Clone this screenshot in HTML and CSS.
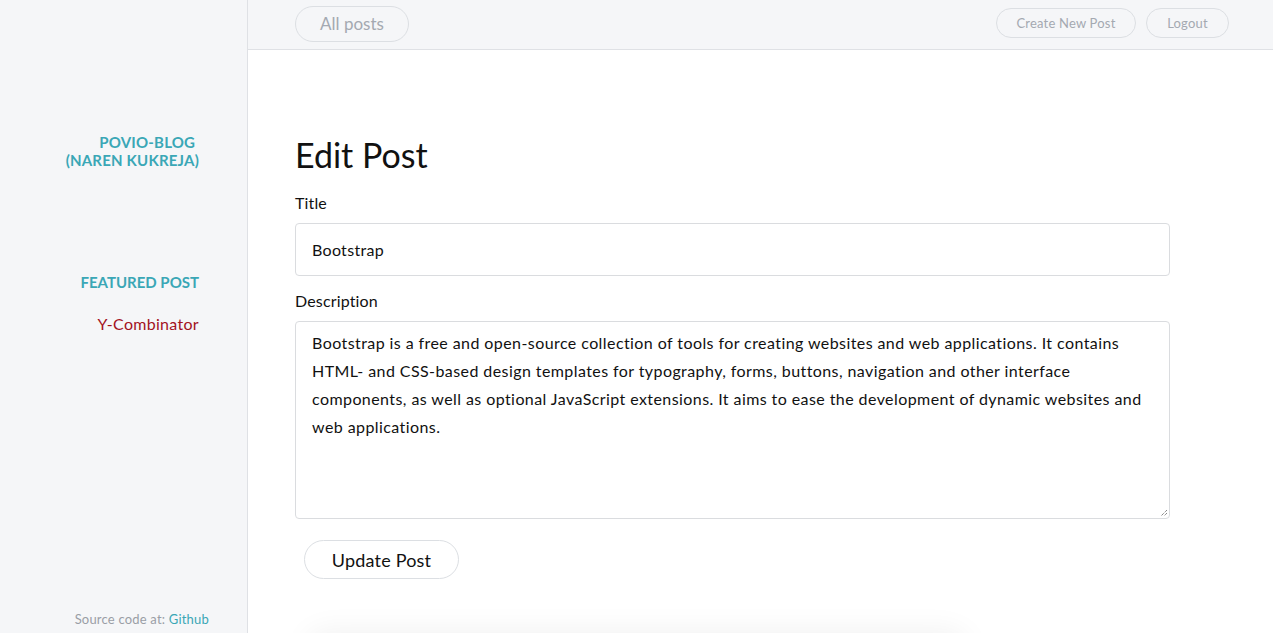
FILE: index.html
```html
<!DOCTYPE html>
<html>
<head>
<meta charset="utf-8">
<link rel="stylesheet" href="styles.css">
</head>
<body>
<div class="app">
  <aside class="sidebar">
    <div class="brand">POVIO-BLOG&nbsp;<br>(NAREN KUKREJA)</div>
    <div class="featured">
      <div class="featured-title">FEATURED POST</div>
      <a class="featured-link" href="#">Y-Combinator</a>
    </div>
    <div class="source">Source code at: <a href="#">Github</a></div>
  </aside>
  <div class="main">
    <header class="topbar">
      <a class="pill pill-lg" href="#">All posts</a>
      <div class="top-right">
        <a class="pill pill-sm" href="#">Create New Post</a>
        <a class="pill pill-sm" href="#">Logout</a>
      </div>
    </header>
    <section class="content">
      <h1 class="heading">Edit Post</h1>
      <label class="label">Title</label>
      <div class="input">Bootstrap</div>
      <label class="label">Description</label>
      <div class="textarea">Bootstrap is a free and open-source collection of tools for creating websites and web applications. It contains HTML- and CSS-based design templates for typography, forms, buttons, navigation and other interface components, as well as optional JavaScript extensions. It aims to ease the development of dynamic websites and web applications.<svg class="grip" width="8" height="8" viewBox="0 0 8 8"><path d="M7 1 L1 7 M7 4 L4 7" stroke="#555" stroke-width="1" stroke-dasharray="1 1"/></svg></div>
      <button class="update">Update Post</button>
      <div class="card"></div>
    </section>
  </div>
</div>
</body>
</html>
```
FILE: styles.css
```css
* { box-sizing: border-box; }
html, body { margin: 0; height: 100%; overflow: hidden; }
body { font-family: "Lato", "Open Sans", sans-serif; color: #111; background: #fff; }
a { text-decoration: none; }
.app { display: flex; height: 633px; overflow: hidden; }
.sidebar {
  width: 248px; flex: none; background: #f5f6f8; border-right: 1px solid #dfe1e5;
  display: flex; flex-direction: column; align-items: flex-end; padding: 133px 48px 0 0;
}
.brand { color: #3aa7b6; font-weight: 700; font-size: 15px; line-height: 18px; text-align: right; letter-spacing: 0.2px; }
.featured { margin-top: 104px; text-align: right; display: flex; flex-direction: column; align-items: flex-end; }
.featured-title { color: #3aa7b6; font-weight: 700; font-size: 15px; line-height: 18px; }
.featured-link { color: #a3121e; font-size: 16px; margin-top: 23px; letter-spacing: 0.3px; }
.source { margin-top: auto; margin-bottom: 6px; margin-right: -10px; font-size: 13px; color: #9a9ea6; line-height: 16px; letter-spacing: 0.2px; }
.source a { color: #3aa7b6; }
.main { flex: 1; display: flex; flex-direction: column; overflow: hidden; }
.topbar {
  flex: none; height: 50px; background: #f5f6f8; border-bottom: 1px solid #dfe1e5;
  display: flex; align-items: center; justify-content: space-between; padding: 0 44px 3px 47px;
}
.pill { border: 1px solid #dcdfe3; border-radius: 20px; color: #a4a9b1; display: inline-flex; align-items: center; justify-content: center; white-space: nowrap; }
.pill-lg { width: 114px; height: 36px; font-size: 17px; margin-top: 1px; }
.pill-sm { height: 30px; font-size: 13px; padding: 0; letter-spacing: 0.2px; }
.top-right { display: flex; gap: 10px; }
.top-right .pill:first-child { width: 140px; }
.top-right .pill:last-child { width: 83px; }
.content { flex: none; padding: 85px 104px 0 47px; display: flex; flex-direction: column; align-items: flex-start; }
.heading { font-weight: 400; font-size: 34px; margin: 0 0 18px; line-height: 40px; }
.label { font-size: 16px; line-height: 20px; margin-bottom: 10px; letter-spacing: 0.15px; }
.input {
  width: 875px; height: 53px; border: 1px solid #dadcdf; border-radius: 4px; padding: 0 16px;
  display: flex; align-items: center; font-size: 16px; margin-bottom: 15px; letter-spacing: 0.3px;
}
.textarea {
  position: relative; width: 875px; height: 198px; border: 1px solid #dadcdf; border-radius: 4px;
  padding: 7px 16px; font-size: 16px; line-height: 28px; letter-spacing: 0.42px;
}
.grip { position: absolute; right: 1px; bottom: 1px; }
.update {
  margin: 21px 0 0 9px; width: 155px; height: 39px; border: 1px solid #dcdfe3; border-radius: 20px;
  background: #fff; font-family: inherit; font-size: 18px; color: #111; letter-spacing: 0.2px;
}
.card { margin: 62px 0 0 22px; width: 640px; height: 60px; border-radius: 8px; box-shadow: 0 0 30px 10px rgba(0,0,0,0.06); }
```
